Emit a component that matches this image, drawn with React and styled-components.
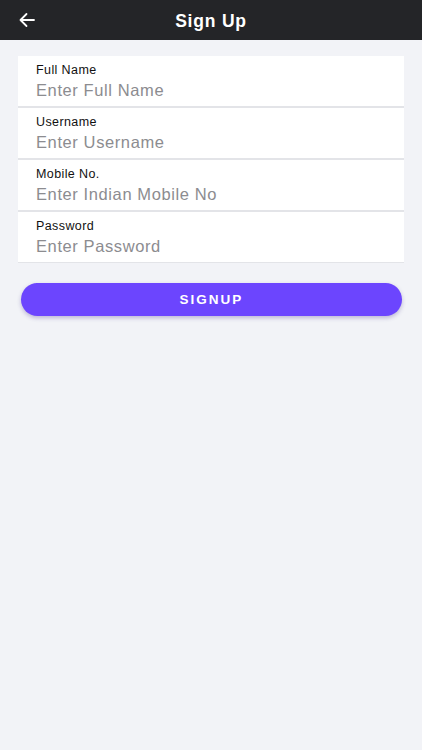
import React from "react";
import styled, { createGlobalStyle } from "styled-components";

const GlobalStyle = createGlobalStyle`
  html, body {
    margin: 0;
    padding: 0;
    background: #f2f3f7;
    font-family: "Liberation Sans", Arial, sans-serif;
  }
`;

const Page = styled.div`
  min-height: 750px;
  background: #f2f3f7;
`;

const Header = styled.div`
  height: 40px;
  padding-top: 2px;
  box-sizing: border-box;
  background: #242528;
  display: flex;
  align-items: center;
  justify-content: center;
  position: relative;
`;

const BackButton = styled.button`
  position: absolute;
  left: 17px;
  top: 10px;
  width: 20px;
  height: 20px;
  padding: 0;
  border: none;
  background: none;
  display: flex;
  align-items: center;
  justify-content: center;
`;

const Title = styled.h1`
  margin: 0;
  color: #ffffff;
  font-size: 17.5px;
  font-weight: bold;
  letter-spacing: 0.8px;
`;

const Form = styled.div`
  padding: 16px 18px 0;
`;

const Fields = styled.div`
  display: flex;
  flex-direction: column;
  gap: 2px;
  background: #e3e4e8;
  padding-bottom: 1px;
`;

const Field = styled.label`
  display: flex;
  flex-direction: column;
  height: 50px;
  padding: 7px 18px 0;
  box-sizing: border-box;
  background: #ffffff;
`;

const Label = styled.span`
  font-size: 12.5px;
  color: #111111;
  line-height: 15px;
  letter-spacing: 0.4px;
`;

const Input = styled.input`
  margin-top: 2px;
  border: none;
  outline: none;
  padding: 0;
  font-family: inherit;
  font-size: 16.5px;
  line-height: 20px;
  letter-spacing: 0.6px;
  color: #222;
  background: transparent;

  &::placeholder {
    color: #8c8c90;
  }
`;

const SubmitButton = styled.button`
  display: block;
  width: 381px;
  height: 33px;
  margin: 20px 0 0 3px;
  border: none;
  border-radius: 17px;
  background: #6c45fe;
  color: #ffffff;
  font-family: inherit;
  font-size: 13.5px;
  font-weight: bold;
  letter-spacing: 2px;
  box-shadow: 0 2px 4px rgba(60, 40, 140, 0.3);
`;

const fields = [
  { label: "Full Name", placeholder: "Enter Full Name", type: "text" },
  { label: "Username", placeholder: "Enter Username", type: "text" },
  { label: "Mobile No.", placeholder: "Enter Indian Mobile No", type: "tel" },
  { label: "Password", placeholder: "Enter Password", type: "password" },
];

const App = () => {
  return (
    <Page>
      <GlobalStyle />
      <Header>
        <BackButton aria-label="Back">
          <svg width="18" height="18" viewBox="0 0 18 18" fill="none">
            <path
              d="M16 9H2.5M8.5 3L2.5 9l6 6"
              stroke="#ffffff"
              strokeWidth="1.8"
              strokeLinecap="round"
              strokeLinejoin="round"
            />
          </svg>
        </BackButton>
        <Title>Sign Up</Title>
      </Header>
      <Form>
        <Fields>
          { fields.map((f) => (
            <Field key={ f.label }>
              <Label>{ f.label }</Label>
              <Input type={ f.type } placeholder={ f.placeholder } />
            </Field>
          )) }
        </Fields>
        <SubmitButton>SIGNUP</SubmitButton>
      </Form>
    </Page>
  );
};

export default App;
